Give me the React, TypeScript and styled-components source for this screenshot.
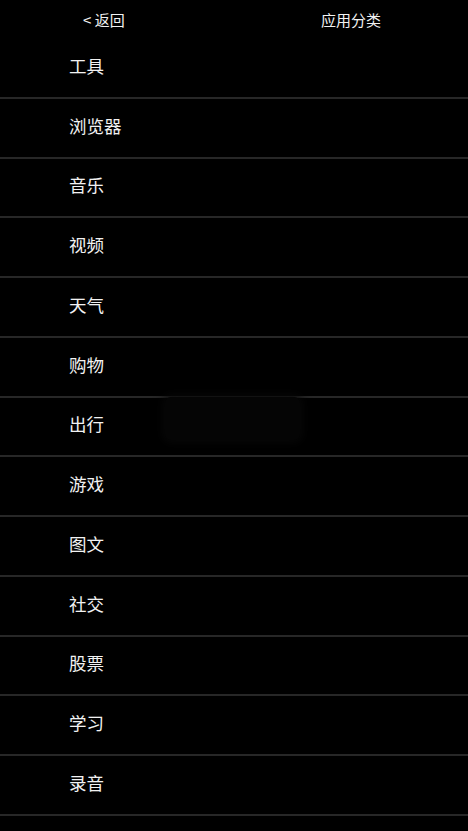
import styled, { createGlobalStyle } from 'styled-components';

const GlobalStyle = createGlobalStyle`
  html, body {
    margin: 0;
    padding: 0;
    background: #000;
  }
  body {
    font-family: "Noto Sans CJK SC", "Noto Sans", sans-serif;
    color: #f2f2f2;
  }
`;

const Page = styled.div`
  position: relative;
  background: #000;
  min-height: 831px;
`;

const Header = styled.header`
  display: grid;
  grid-template-columns: 1fr 1fr;
  align-items: center;
  height: 39px;
  padding-bottom: 1px;
  box-sizing: border-box;
  font-size: 15px;
`;

const BackLink = styled.a`
  justify-self: start;
  padding-left: 83px;
  color: #f2f2f2;
  text-decoration: none;
  cursor: pointer;
`;

const Title = styled.h1`
  justify-self: center;
  margin: 0;
  font-size: 15px;
  font-weight: normal;
`;

const List = styled.ul`
  list-style: none;
  margin: 0;
  padding: 0;
`;

const Item = styled.li`
  display: flex;
  align-items: center;
  box-sizing: border-box;
  height: 59.75px;
  padding: 0 0 5px 69px;
  border-bottom: 2px solid #272727;
  font-size: 17.5px;
`;

const Toast = styled.div`
  position: absolute;
  left: 165px;
  top: 397px;
  width: 135px;
  height: 43px;
  border-radius: 6px;
  background: #050505;
  box-shadow: 0 0 8px 3px rgba(8, 8, 8, 0.9);
`;

const categories = ['工具', '浏览器', '音乐', '视频', '天气', '购物', '出行', '游戏', '图文', '社交', '股票', '学习', '录音'];

const App = () => {
  return (
    <Page>
      <GlobalStyle />
      <Header>
        <BackLink>&lt; 返回</BackLink>
        <Title>应用分类</Title>
      </Header>

      <List>
        {categories.map(name => (
          <Item key={name}>{name}</Item>
        ))}
      </List>

      <Toast />
    </Page>
  );
};

export default App;
